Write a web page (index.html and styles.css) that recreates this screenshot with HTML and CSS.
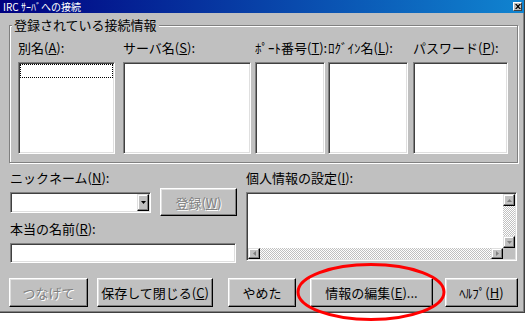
FILE: index.html
```html
<!DOCTYPE html>
<html lang="ja">
<head>
  <meta charset="UTF-8">
  <title>IRC ｻｰﾊﾞへの接続</title>
  <link rel="stylesheet" href="styles.css">
</head>
<body>
  <div class="dialog">
    <div class="titlebar">
      <span class="title">IRC ｻｰﾊﾞへの接続</span>
      <span class="close">
        <svg width="6" height="5" viewBox="0 0 6 5"><path d="M0 0h1.5l1.5 1.6 1.5-1.6h1.5l-2.2 2.5 2.2 2.5h-1.5l-1.5-1.6-1.5 1.6h-1.5l2.2-2.5z" fill="#000"/></svg>
      </span>
    </div>

    <div class="content">
      <fieldset class="group">
        <legend>登録されている接続情報</legend>
        <div class="columns">
          <div class="col col-alias">
            <label>別名(<u>A</u>):</label>
            <div class="listbox"><div class="focus-row"></div></div>
          </div>
          <div class="col col-server">
            <label>サーバ名(<u>S</u>):</label>
            <div class="listbox"></div>
          </div>
          <div class="col col-port">
            <label>ﾎﾟｰﾄ番号(<u>T</u>):</label>
            <div class="listbox"></div>
          </div>
          <div class="col col-login">
            <label>ﾛｸﾞｲﾝ名(<u>L</u>):</label>
            <div class="listbox"></div>
          </div>
          <div class="col col-pass">
            <label>パスワード(<u>P</u>):</label>
            <div class="listbox"></div>
          </div>
        </div>
      </fieldset>

      <div class="lower">
        <div class="left">
          <div class="label">ニックネーム(<u>N</u>):</div>
          <div class="row">
            <div class="combo">
              <div class="combo-field"></div>
              <div class="drop-btn">
                <svg width="5" height="3" viewBox="0 0 5 3"><path d="M0 0h5l-2.5 3z" fill="#000"/></svg>
              </div>
            </div>
            <button class="btn btn-register" disabled>登録(<u>W</u>)</button>
          </div>
          <div class="label label-name">本当の名前(<u>R</u>):</div>
          <div class="field realname"></div>
        </div>

        <div class="right">
          <div class="label">個人情報の設定(<u>I</u>):</div>
          <div class="memo">
            <div class="memo-body">
              <div class="memo-text"></div>
              <div class="vscroll">
                <div class="sb-btn"><svg width="5" height="3" viewBox="0 0 5 3"><path d="M2.5 0l2.5 3h-5z" fill="#808080"/></svg></div>
                <div class="sb-track"></div>
                <div class="sb-btn"><svg width="5" height="3" viewBox="0 0 5 3"><path d="M0 0h5l-2.5 3z" fill="#808080"/></svg></div>
              </div>
            </div>
            <div class="hscroll">
              <div class="sb-btn"><svg width="3" height="5" viewBox="0 0 3 5"><path d="M3 0v5l-3-2.5z" fill="#808080"/></svg></div>
              <div class="sb-track"></div>
              <div class="sb-btn"><svg width="3" height="5" viewBox="0 0 3 5"><path d="M0 0v5l3-2.5z" fill="#808080"/></svg></div>
              <div class="sb-corner"></div>
            </div>
          </div>
        </div>
      </div>

      <div class="buttons">
        <button class="btn btn-connect" disabled>つなげて</button>
        <button class="btn btn-save">保存して閉じる(<u>C</u>)</button>
        <button class="btn btn-cancel">やめた</button>
        <button class="btn btn-edit">情報の編集(<u>E</u>)...</button>
        <button class="btn btn-help">ﾍﾙﾌﾟ(<u>H</u>)</button>
      </div>
    </div>
  </div>

  <!-- red mark drawn over the edit button -->
  <svg class="highlight" width="152" height="62" viewBox="0 0 152 62">
    <ellipse cx="76" cy="30" rx="73" ry="27.5" fill="none" stroke="#f00" stroke-width="3"/>
  </svg>
</body>
</html>
```

FILE: styles.css
```css
html {
  background: #fff;
}
body {
  margin: 0;
  height: 325px;
  overflow: hidden;
  background: #fff;
  font-family: "Noto Sans CJK JP", "Noto Sans", sans-serif;
  font-size: 13px;
  color: #000;
  position: relative;
}
u {
  text-underline-offset: 1px;
}
.dialog {
  width: 525px;
  height: 313px;
  box-sizing: border-box;
  background: #c0c0c0;
  border-right: 1px solid #404040;
  border-bottom: 1px solid #404040;
  box-shadow: inset -1px -1px 0 #808080;
}
.titlebar {
  height: 13px;
  background: linear-gradient(to right, #000080, #1084d0);
  display: flex;
  align-items: center;
  justify-content: space-between;
  padding: 0 2px 0 3px;
}
.title {
  color: #fff;
  font-size: 10px;
  line-height: 13px;
}
.close {
  width: 9px;
  height: 9px;
  box-sizing: border-box;
  background: #c0c0c0;
  border: 1px solid;
  border-color: #fff #404040 #404040 #fff;
  display: flex;
  align-items: center;
  justify-content: center;
}
.content {
  padding: 4px 0 0 9px;
}

/* group box */
.group {
  width: 509px;
  box-sizing: border-box;
  margin: 0;
  min-width: 0;
  padding: 7px 8px 8px 8px;
  border: 1px solid #808080;
  box-shadow: inset 1px 1px 0 #fff, 1px 1px 0 #fff;
}
.group legend {
  padding: 0 2px;
  margin-left: -6px;
  line-height: 16px;
  background: #c0c0c0;
}
.columns {
  display: flex;
}
.col {
  display: flex;
  flex-direction: column;
}
.col label {
  line-height: 15px;
  height: 15px;
  white-space: nowrap;
  margin-bottom: 7px;
}
.col-alias { width: 97px; }
.col-server { width: 128px; margin-left: 8px; }
.col-port { width: 70px; margin-left: 4px; }
.col-login { width: 80px; margin-left: 3px; }
.col-pass { width: 95px; margin-left: 5px; }

.listbox,
.field,
.combo,
.memo {
  box-sizing: border-box;
  background: #fff;
  border: 1px solid;
  border-color: #808080 #fff #fff #808080;
  box-shadow: inset 1px 1px 0 #404040, inset -1px -1px 0 #dfdfdf;
}
.listbox {
  height: 92px;
  padding: 1px;
}
.focus-row {
  height: 14px;
  box-sizing: border-box;
  border: 1px dotted #000;
}

/* lower area */
.lower {
  display: flex;
  margin-top: 7px;
  padding-left: 1px;
}
.left {
  width: 227px;
}
.right {
  width: 271px;
  margin-left: 9px;
}
.label {
  line-height: 15px;
  white-space: nowrap;
}
.row {
  display: flex;
  align-items: center;
  height: 28px;
  margin-top: 3px;
}
.combo {
  width: 141px;
  height: 21px;
  padding: 1px;
  display: flex;
}
.combo-field {
  flex: 1;
}
.drop-btn {
  width: 12px;
  box-sizing: border-box;
  background: #c0c0c0;
  border: 1px solid;
  border-color: #dfdfdf #000 #000 #dfdfdf;
  box-shadow: inset -1px -1px 0 #808080, inset 1px 1px 0 #fff;
  display: flex;
  align-items: center;
  justify-content: center;
}
.label-name {
  margin-top: 5px;
}
.realname {
  width: 226px;
  height: 20px;
  margin-top: 7px;
}
.right .label {
  margin-bottom: 7px;
}
.memo {
  width: 271px;
  height: 69px;
  padding: 1px;
  display: flex;
  flex-direction: column;
}
.memo-body {
  flex: 1;
  display: flex;
}
.memo-text {
  flex: 1;
}
.vscroll {
  width: 12px;
  display: flex;
  flex-direction: column;
}
.vscroll .sb-btn {
  height: 12px;
}
.hscroll {
  height: 11px;
  display: flex;
}
.hscroll .sb-btn {
  width: 12px;
}
.sb-btn {
  box-sizing: border-box;
  background: #c0c0c0;
  border: 1px solid;
  border-color: #dfdfdf #000 #000 #dfdfdf;
  box-shadow: inset -1px -1px 0 #808080, inset 1px 1px 0 #fff;
  display: flex;
  align-items: center;
  justify-content: center;
}
.sb-track {
  flex: 1;
  background: repeating-conic-gradient(#fff 0 25%, #c0c0c0 0 50%) 0 0 / 2px 2px;
}
.sb-corner {
  width: 12px;
  background: #c0c0c0;
}

/* push buttons */
.btn {
  box-sizing: border-box;
  height: 29px;
  padding: 0;
  font: inherit;
  color: #000;
  background: #c0c0c0;
  border: 1px solid;
  border-color: #fff #000 #000 #fff;
  box-shadow: inset -1px -1px 0 #808080, inset 1px 1px 0 #dfdfdf;
  white-space: nowrap;
}
.btn:disabled {
  color: #808080;
  text-shadow: 1px 1px 0 #fff;
}
.btn-register {
  width: 77px;
  height: 28px;
  margin-left: 9px;
}
.buttons {
  display: flex;
  margin-top: 15px;
}
.btn-connect { width: 79px; }
.btn-save { width: 116px; margin-left: 9px; }
.btn-cancel { width: 68px; margin-left: 15px; }
.btn-edit { width: 123px; margin-left: 14px; }
.btn-help { width: 73px; margin-left: 12px; }

.highlight {
  position: absolute;
  left: 295px;
  top: 262px;
  pointer-events: none;
}
```
